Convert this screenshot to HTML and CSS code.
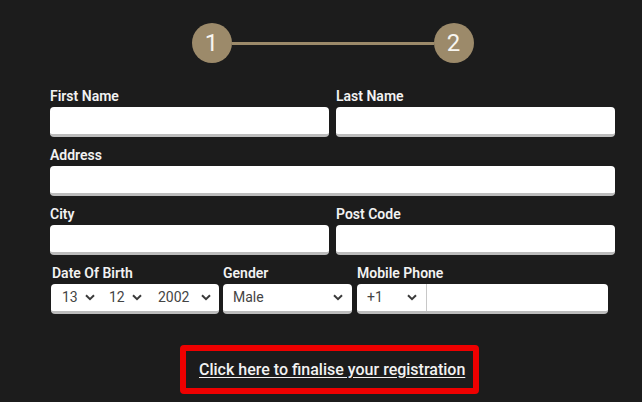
FILE: index.html
```html
<!DOCTYPE html>
<html lang="en">
<head>
<meta charset="utf-8">
<title>Registration</title>
<link rel="stylesheet" href="styles.css">
</head>
<body>
<div class="page">
  <div class="stepper">
    <div class="step">1</div>
    <div class="bar"></div>
    <div class="step">2</div>
  </div>

  <div class="row two">
    <div class="field"><div class="label">First Name</div><div class="input"></div></div>
    <div class="field"><div class="label">Last Name</div><div class="input"></div></div>
  </div>
  <div class="row">
    <div class="field"><div class="label">Address</div><div class="input"></div></div>
  </div>
  <div class="row two">
    <div class="field"><div class="label">City</div><div class="input"></div></div>
    <div class="field"><div class="label">Post Code</div><div class="input"></div></div>
  </div>

  <div class="row bottom">
    <div class="field dob">
      <div class="label">Date Of Birth</div>
      <div class="box">
        <div class="sel s-day"><span>13</span><svg class="chev" width="10" height="7" viewBox="0 0 10 7"><path d="M1 1.2l4 4 4-4" stroke="#3a3a3a" stroke-width="2" fill="none"/></svg></div>
        <div class="sel s-month"><span>12</span><svg class="chev" width="10" height="7" viewBox="0 0 10 7"><path d="M1 1.2l4 4 4-4" stroke="#3a3a3a" stroke-width="2" fill="none"/></svg></div>
        <div class="sel s-year"><span>2002</span><svg class="chev" width="10" height="7" viewBox="0 0 10 7"><path d="M1 1.2l4 4 4-4" stroke="#3a3a3a" stroke-width="2" fill="none"/></svg></div>
      </div>
    </div>
    <div class="field gender">
      <div class="label">Gender</div>
      <div class="box">
        <div class="sel s-gender"><span>Male</span><svg class="chev" width="10" height="7" viewBox="0 0 10 7"><path d="M1 1.2l4 4 4-4" stroke="#3a3a3a" stroke-width="2" fill="none"/></svg></div>
      </div>
    </div>
    <div class="field phone">
      <div class="label">Mobile Phone</div>
      <div class="box">
        <div class="sel s-code"><span>+1</span><svg class="chev" width="10" height="7" viewBox="0 0 10 7"><path d="M1 1.2l4 4 4-4" stroke="#3a3a3a" stroke-width="2" fill="none"/></svg></div>
        <div class="num"></div>
      </div>
    </div>
  </div>

  <div class="cta-wrap">
    <div class="cta"><a href="#">Click here to finalise your registration</a></div>
  </div>
</div>
</body>
</html>
```

FILE: styles.css
```css
* { box-sizing: border-box; }
html, body { margin: 0; padding: 0; }
body {
  background: #1c1c1c;
  font-family: Roboto, "Noto Sans", "Liberation Sans", sans-serif;
  color: #f2f2f2;
  width: 642px;
  height: 402px;
  overflow: hidden;
}
.page {
  width: 565px;
  margin-left: 50px;
  padding-top: 23px;
}
.stepper {
  display: flex;
  align-items: center;
  justify-content: center;
  height: 40px;
}
.step {
  width: 40px;
  height: 40px;
  border-radius: 50%;
  background: #9c8a6a;
  color: #f7f5f0;
  font-size: 24px;
  line-height: 40px;
  text-align: center;
}
.bar {
  width: 202px;
  height: 3px;
  background: #9c8a6a;
}
.row { display: flex; }
.row.two { gap: 7px; }
.row.two .field { flex: 1; }
.row .field { flex: 1; }
.stepper + .row { margin-top: 25px; }
.row + .row { margin-top: 10px; }
.label {
  font-size: 14px;
  line-height: 16px;
  font-weight: 600;
  color: #f2f2f2;
  margin-bottom: 3px;
}
.input {
  height: 30px;
  background: #fff;
  border-radius: 4px;
  border-bottom: 3px solid #bcbcbc;
}
.row.bottom { padding-left: 1px; }
.row.bottom .field { flex: none; }
.dob { width: 168px; }
.gender { width: 129px; margin-left: 4px; }
.phone { width: 251px; margin-left: 5px; }
.dob .label { padding-left: 1px; }
.box {
  display: flex;
  height: 30px;
  background: #fff;
  border-radius: 4px;
  border-bottom: 3px solid #bcbcbc;
  color: #444;
  font-size: 14px;
}
.sel {
  display: flex;
  align-items: center;
  justify-content: space-between;
  padding: 0 0 0 11px;
}
.sel span { line-height: 27px; }
.chev { flex: none; }
.s-day { width: 51px; padding-right: 7px; }
.s-month { width: 47px; padding-left: 7px; padding-right: 7px; }
.s-year { width: 70px; padding-left: 9px; padding-right: 8px; }
.s-gender { width: 100%; padding-left: 10px; padding-right: 9px; }
.s-code { width: 70px; padding-left: 10px; padding-right: 9px; border-right: 1px solid #c8c8c8; }
.num { flex: 1; }
.cta-wrap {
  margin-top: 31px;
  padding-left: 130px;
}
.cta {
  width: 299px;
  height: 49px;
  border: 6px solid #ee0000;
  border-radius: 4px;
  display: flex;
  align-items: center;
  padding-left: 13px;
}
.cta a {
  color: #f2f2f2;
  font-size: 16px;
  font-weight: 500;
  text-decoration: underline;
  text-underline-offset: 2px;
}
```
